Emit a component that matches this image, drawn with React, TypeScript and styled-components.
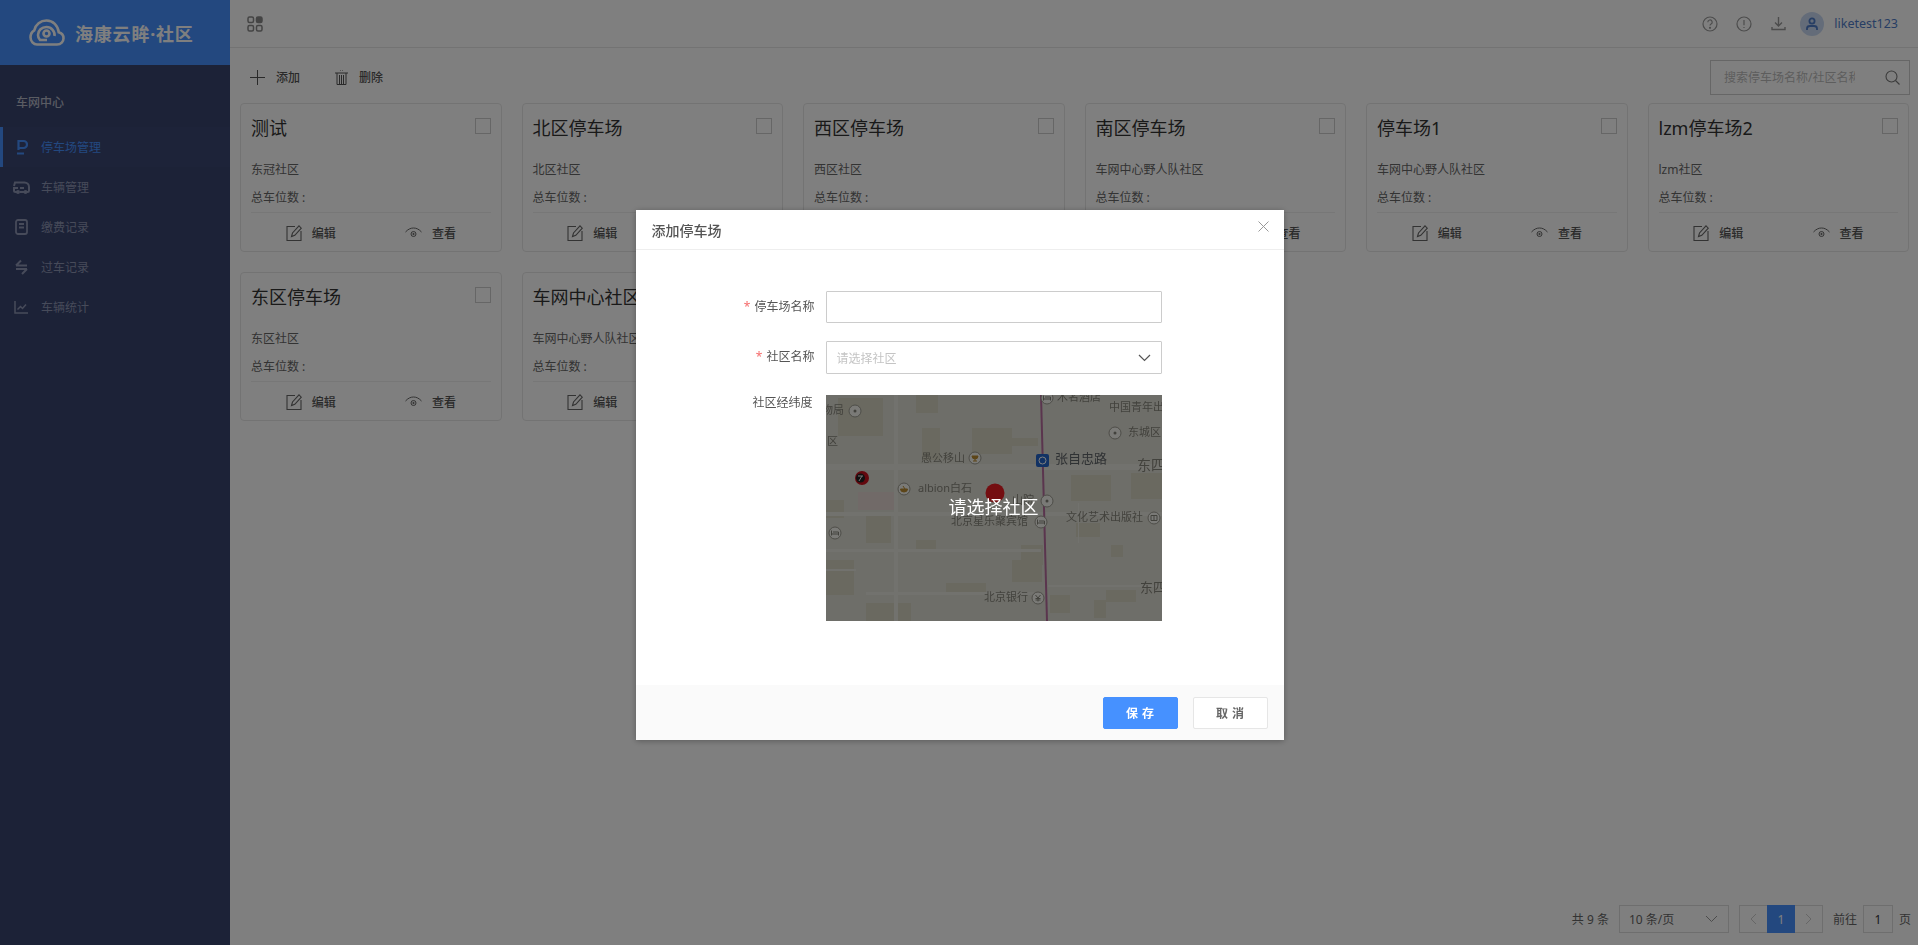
import React from "react";
import styled, { createGlobalStyle } from "styled-components";

const FONT = `"Noto Sans", "Noto Sans CJK SC", sans-serif`;

const Global = createGlobalStyle`
  html, body { margin: 0; padding: 0; height: 100%; overflow: hidden; background: #fff; }
  body { font-family: ${FONT}; font-size: 12px; color: #333; }
  * { box-sizing: border-box; }
`;

const Shell = styled.div`
  display: flex;
  width: 100%;
  height: 100vh;
`;
const Sidebar = styled.aside`
  width: 230px;
  flex: none;
  background: #38446e;
  display: flex;
  flex-direction: column;
`;
const Brand = styled.div`
  height: 65px;
  background: #4691ff;
  display: flex;
  align-items: center;
  padding-left: 29px;
  gap: 10px;
`;
const BrandName = styled.span`
  color: #fff;
  font-size: 18px;
  font-weight: 700;
  letter-spacing: 0.8px;
  white-space: nowrap;
  line-height: 1;
  margin-top: 3px;
`;
const MenuTitle = styled.div`
  height: 62px;
  line-height: 76px;
  padding-left: 16px;
  font-size: 12px;
  font-weight: 500;
  color: #b4b8c6;
`;
const MenuItem = styled.div<{ $active?: boolean }>`
  height: 40px;
  display: flex;
  align-items: center;
  font-size: 12px;
  color: ${(p) => (p.$active ? "#4691ff" : "#8e96b4")};
  background: ${(p) => (p.$active ? "#3b4672" : "transparent")};
  border-left: 3px solid ${(p) => (p.$active ? "#4691ff" : "transparent")};
  padding-left: 8px;
  gap: 9px;
`;
const MenuIcon = styled.span`
  width: 21px;
  height: 18px;
  display: flex;
  align-items: center;
  justify-content: center;
`;

const Main = styled.main`
  flex: 1;
  min-width: 0;
  display: flex;
  flex-direction: column;
`;
const TopBar = styled.header`
  height: 48px;
  flex: none;
  border-bottom: 1px solid #e6e6e6;
  display: flex;
  align-items: center;
  padding: 0 20px 0 17px;
`;
const TopRight = styled.div`
  margin-left: auto;
  display: flex;
  align-items: center;
`;
const TopIcon = styled.span`
  width: 34px;
  display: flex;
  justify-content: center;
  color: #999;
`;
const Avatar = styled.span`
  width: 24px;
  height: 24px;
  border-radius: 50%;
  background: #c9d9f2;
  display: flex;
  align-items: center;
  justify-content: center;
  margin: 0 10px 0 5px;
`;
const UserName = styled.span`
  color: #4f7cc8;
  font-size: 12.5px;
`;
const ToolRow = styled.div`
  height: 55px;
  flex: none;
  display: flex;
  align-items: center;
  padding: 3px 8px 0 20px;
`;
const ToolBtn = styled.button`
  border: 0;
  background: none;
  padding: 0;
  font: 500 12px ${FONT};
  color: #555;
  display: flex;
  align-items: center;
  gap: 11px;
  margin-right: 35px;
`;
const SearchBox = styled.div`
  margin-left: auto;
  width: 200px;
  height: 35px;
  border: 1px solid #ccc;
  display: flex;
  align-items: center;
  padding: 0 9px 0 13px;
`;
const SearchInput = styled.input`
  flex: 1;
  min-width: 0;
  width: 129px;
  border: 0;
  outline: 0;
  background: none;
  padding: 0;
  margin-right: 30px;
  font: 12px ${FONT};
  &::placeholder { color: #bbb; opacity: 1; }
`;
const Grid = styled.section`
  display: grid;
  grid-template-columns: repeat(6, 261.5px);
  grid-auto-rows: 149px;
  gap: 20px 20px;
  padding-left: 10px;
`;
const Card = styled.article`
  border: 1px solid #e6e6e6;
  border-radius: 4px;
  padding: 0 10px;
  display: flex;
  flex-direction: column;
  position: relative;
  overflow: hidden;
`;
const CardHead = styled.div`
  display: flex;
  justify-content: space-between;
  align-items: flex-start;
  height: 52px;
  padding-top: 9px;
`;
const CardTitle = styled.h3`
  margin: 0;
  font-size: 18px;
  font-weight: 400;
  line-height: 30px;
  color: #333;
  white-space: nowrap;
`;
const Check = styled.span`
  width: 16px;
  height: 16px;
  border: 1px solid #ccc;
  flex: none;
  margin-top: 5px;
`;
const CardLine = styled.div`
  font-size: 12px;
  line-height: 28px;
  height: 28px;
  color: #666;
  white-space: nowrap;
`;
const Actions = styled.div`
  border-top: 1px solid #eee;
  margin-top: auto;
  height: 39px;
  padding-top: 1px;
  display: grid;
  grid-template-columns: 1fr 1fr;
`;
const ActionBtn = styled.span`
  display: flex;
  align-items: center;
  justify-content: center;
  gap: 10px;
  font-size: 12px;
  font-weight: 500;
  color: #555;
`;
const Pager = styled.footer`
  margin-top: auto;
  height: 40px;
  margin-bottom: 6px;
  display: flex;
  align-items: center;
  justify-content: flex-end;
  padding-right: 7px;
  font-size: 12px;
  color: #666;
`;
const PageSize = styled.div`
  width: 110px;
  height: 28px;
  margin: 0 10px;
  border: 1px solid #ddd;
  display: flex;
  align-items: center;
  justify-content: space-between;
  padding: 0 10px 0 9px;
`;
const PageNums = styled.div`
  display: flex;
  height: 28px;
  border: 1px solid #ddd;
  margin-right: 10px;
`;
const PageCell = styled.span<{ $on?: boolean }>`
  width: ${(p) => (p.$on ? 28 : 27)}px;
  margin: ${(p) => (p.$on ? "-1px 0" : "0")};
  display: flex;
  align-items: center;
  justify-content: center;
  color: ${(p) => (p.$on ? "#fff" : "#ccc")};
  background: ${(p) => (p.$on ? "#4691ff" : "transparent")};
`;
const PageInput = styled.span`
  width: 30px;
  height: 28px;
  margin: 0 6px;
  border: 1px solid #ddd;
  display: flex;
  align-items: center;
  justify-content: center;
  color: #333;
`;

const Overlay = styled.div`
  position: fixed;
  inset: 0;
  background: rgba(0, 0, 0, 0.5);
  display: flex;
  justify-content: center;
  padding: 210px 0 0 1px;
`;
const Modal = styled.div`
  width: 648px;
  height: 530px;
  background: #fff;
  box-shadow: 0 1px 6px rgba(0, 0, 0, 0.3);
  display: flex;
  flex-direction: column;
`;
const ModalHead = styled.div`
  height: 40px;
  flex: none;
  border-bottom: 1px solid #eee;
  display: flex;
  align-items: center;
  justify-content: space-between;
  padding: 0 15px 0 16px;
`;
const ModalTitle = styled.h2`
  margin: 0;
  font-size: 14px;
  font-weight: 500;
  color: #555;
`;
const CloseBtn = styled.span`
  display: flex;
  margin-top: -6px;
`;
const ModalBody = styled.div`
  flex: 1;
  padding-top: 41px;
  display: flex;
  flex-direction: column;
`;
const FormRow = styled.div<{ $gap: number }>`
  display: flex;
  margin-bottom: ${(p) => p.$gap}px;
`;
const Label = styled.label<{ $h: number; $shift?: number }>`
  width: ${(p) => 179 - (p.$shift ?? 0)}px;
  line-height: ${(p) => p.$h}px;
  text-align: right;
  font-size: 12px;
  color: #555;
  margin-right: ${(p) => 11 + (p.$shift ?? 0)}px;
  white-space: nowrap;
`;
const Star = styled.span`
  color: #f56c6c;
  margin-right: 4px;
`;
const TextField = styled.input`
  width: 336px;
  height: 32px;
  border: 1px solid #ccc;
  border-radius: 1px;
  outline: 0;
  padding: 0 10px;
  font: 12px ${FONT};
`;
const SelectField = styled.div`
  width: 336px;
  height: 33px;
  border: 1px solid #ccc;
  border-radius: 1px;
  display: flex;
  align-items: center;
  justify-content: space-between;
  padding: 0 10px;
  color: #c4c4c4;
  font-size: 12px;
`;
const MapBox = styled.div`
  width: 336px;
  height: 226px;
  position: relative;
  overflow: hidden;
`;
const MapShade = styled.div`
  position: absolute;
  inset: 0;
  background: rgba(0, 0, 0, 0.5);
  color: #fff;
  font-size: 18px;
  display: flex;
  align-items: center;
  justify-content: center;
  padding-bottom: 4px;
`;
const ModalFoot = styled.div`
  height: 55px;
  flex: none;
  background: #fafafa;
  display: flex;
  align-items: center;
  justify-content: flex-end;
  padding: 0 16px 0 0;
  gap: 15px;
`;
const FootBtn = styled.button<{ $primary?: boolean }>`
  width: 75px;
  height: 32px;
  border: 1px solid ${(p) => (p.$primary ? "#4691ff" : "#e6e6e6")};
  border-radius: 2px;
  background: ${(p) => (p.$primary ? "#4691ff" : "#fff")};
  color: ${(p) => (p.$primary ? "#fff" : "#666")};
  font: 700 12px ${FONT};
  letter-spacing: 4px;
  padding: 0 0 0 4px;
`;

const Logo = () => (
  <svg width="36" height="27" viewBox="0 0 36 27" fill="none" stroke="#fff" strokeWidth="2.6">
    <path d="M8 25.500h20c4 0 6.500-3 6.500-6.300 0-3-2-5.300-4.800-6C29 6.500 24 1.500 17.500 1.500 11.500 1.500 6.500 5.500 5.300 11.300 2.800 12.800 1.500 15.300 1.500 18.300c0 4 3 7.200 6.500 7.200z" />
    <path d="M25.500 17c.7-4.500-3-9-8-9-4.700 0-8.500 3.500-8.500 8 0 2 .8 3.600 2 5h7" />
    <circle cx="17.500" cy="14.500" r="3" />
  </svg>
);

const Ico = ({ w = 16, h = 16, c = "currentColor", sw = 1.5, children }: { w?: number; h?: number; c?: string; sw?: number; children: React.ReactNode }) => (
  <svg width={w} height={h} viewBox={`0 0 ${w} ${h}`} fill="none" stroke={c} strokeWidth={sw}>
    {children}
  </svg>
);

const menu: { name: string; icon: React.ReactNode }[] = [
  { name: "停车场管理", icon: <Ico w={12} h={16} sw={2.200}><path d="M2.500 11V2h5a3.500 3.500 0 0 1 0 7H2.500M1 14.500h7" /></Ico> },
  { name: "车辆管理", icon: <Ico w={17} h={13} sw={2}><path d="M4 11H2.500C1.500 11 1 10.300 1 9.500V7h4M1 5l1-3.500h9.500C14 1.500 16 3.500 16 6v3.500c0 1-.5 1.500-1.300 1.500H14M7 11h4M11 7H7" /><circle cx="5" cy="11" r="1" /><circle cx="12.500" cy="11" r="1" /></Ico> },
  { name: "缴费记录", icon: <Ico w={13} h={16} sw={1.800}><rect x="1" y="1" width="11" height="14" rx="2" /><path d="M4 5h5M4 8.500h5" /></Ico> },
  { name: "过车记录", icon: <Ico w={13} h={16} sw={2}><path d="M1 6.500h11M1 6.500l5-5M12 10H1M12 10l-5 5" /></Ico> },
  { name: "车辆统计", icon: <Ico w={15} h={14} sw={1.500}><path d="M1 1v12h13M3.500 9.500l3-3 2 2 3.500-4" /></Ico> },
];

const cards = [
  ["测试", "东冠社区"],
  ["北区停车场", "北区社区"],
  ["西区停车场", "西区社区"],
  ["南区停车场", "车网中心野人队社区"],
  ["停车场1", "车网中心野人队社区"],
  ["lzm停车场2", "lzm社区"],
  ["东区停车场", "东区社区"],
  ["车网中心社区停车场", "车网中心野人队社区"],
];

const EditIcon = () => (
  <svg width="16" height="16" viewBox="0 0 16 16" fill="none" stroke="#666" strokeWidth="1.100">
    <path d="M9 1.500H1v14h14V6" />
    <path d="M5.500 11.500l1-3.500L13 .8l2.300 2.400L8.800 10.300z" />
  </svg>
);
const EyeIcon = () => (
  <svg width="17" height="12" viewBox="0 0 17 12" fill="none" stroke="#666" strokeWidth="1">
    <path d="M.5 5C3 2.300 5.500 1 8.500 1s5.500 1.300 8 4" />
    <circle cx="8.500" cy="7" r="2.500" />
    <circle cx="8.500" cy="7" r=".7" fill="#666" />
  </svg>
);

const MAP_TEXT = "#85847a";

const MapPicture = () => {
  const t = (x: number, y: number, s: string, size = 11, fill = MAP_TEXT) => (
    <text key={s + x} x={x} y={y} fontSize={size} fill={fill} dominantBaseline="middle" fontFamily={FONT}>{s}</text>
  );
  const poi = (x: number, y: number, inner: React.ReactNode) => (
    <g key={`${x}-${y}`} transform={`translate(${x} ${y})`}>
      <circle r="6" fill="#f4f4ee" stroke="#9b9a90" />
      {inner}
    </g>
  );
  const dot = <circle r="1.500" fill="#85847a" />;
  const bed = <path d="M-3.500 2.500v-5M-3.500 1h7v1.500M-2-1h5.500v2" fill="none" stroke="#85847a" />;
  const yen = <path d="M-2.500-3L0 0l2.500-3M0 0v3.500M-2.500.5h5M-2.500 2h5" fill="none" stroke="#85847a" />;
  const book = <path d="M-3-2.500h6v5h-6zM0-2.500v5" fill="none" stroke="#85847a" />;
  const cup = <path d="M-3-2h6a3 3 0 0 1-6 0zM0 1v2M-2 3h4" fill="#b98a30" stroke="#b98a30" />;
  const bowl = <path d="M-3.500 0h7a3.500 3 0 0 1-7 0zM-1-3l2 3" fill="#b98a30" stroke="#b98a30" />;
  const blocks: [number, number, number, number][] = [
    [12, 3, 45, 38], [90, 0, 22, 18], [96, 33, 18, 32], [146, 33, 40, 26], [184, 43, 28, 8],
    [245, 80, 40, 26], [305, 78, 31, 26], [0, 105, 18, 18], [40, 118, 25, 30], [0, 165, 28, 35],
    [195, 150, 22, 20], [186, 165, 30, 22], [120, 188, 40, 12], [40, 208, 45, 18], [90, 145, 20, 12],
    [285, 150, 12, 12], [224, 200, 20, 18], [280, 195, 30, 12], [250, 128, 24, 14], [268, 205, 12, 18],
  ];
  const roads: [number, number, number, number][] = [
    [0, 69, 336, 6], [0, 117, 336, 4], [0, 154, 215, 3], [40, 197, 175, 3], [68, 0, 4, 226],
    [222, 190, 114, 2], [0, 174, 30, 2], [252, 108, 1, 40],
  ];
  return (
    <svg width="336" height="226" viewBox="0 0 336 226" aria-hidden="true">
      <rect width="336" height="226" fill="#dddcd2" />
      {blocks.map(([x, y, w, h], i) => <rect key={i} x={x} y={y} width={w} height={h} fill="#d5d3c0" />)}
      <rect x="32" y="97" width="36" height="18" fill="#e3d5d1" />
      {roads.map(([x, y, w, h], i) => <rect key={i} x={x} y={y} width={w} height={h} fill="#e5e4dc" />)}
      <path d="M215 0L221 226" stroke="#b56a9c" strokeWidth="2" />
      {t(-4, 16, "物局")}{poi(29, 16, dot)}
      {t(1, 47, "区")}
      {poi(221, 3, bed)}
      {t(231, 3, "木名酒店")}
      {t(283, 13, "中国青年出")}
      {poi(289, 38, dot)}{t(302, 38, "东城区")}
      {t(95, 64, "愚公移山")}
      {poi(149, 63, cup)}
      <rect x="210" y="59" width="13" height="13" rx="2" fill="#2464c8" />
      <circle cx="216.500" cy="65.500" r="3.500" fill="none" stroke="#fff" />
      {t(229, 65, "张自忠路", 13, "#5f6468")}
      {t(311, 71, "东四", 14)}
      <circle cx="36" cy="83" r="7" fill="#c8101c" />
      <circle cx="34.500" cy="83" r="4.500" fill="#222" />
      <path d="M32 81h5M33 86l3-5" stroke="#eee" strokeWidth="1" />
      {poi(78, 94, bowl)}
      {t(92, 94, "albion白石")}
      <circle cx="169" cy="98" r="9.500" fill="#e81c22" />
      {t(186, 106, "山院")}
      {poi(221, 106, dot)}
      {t(125, 127, "北京星乐聚宾馆")}
      {poi(215, 127, bed)}
      {t(240, 123, "文化艺术出版社")}
      {poi(328, 123, book)}
      {poi(9, 138, bed)}
      {t(314, 194, "东四", 13)}
      {t(158, 203, "北京银行")}
      {poi(212, 203, yen)}
    </svg>
  );
};

export default function App() {
  return (
    <>
      <Global />
      <Shell>
        <Sidebar>
          <Brand>
            <Logo />
            <BrandName>海康云眸·社区</BrandName>
          </Brand>
          <MenuTitle>车网中心</MenuTitle>
          {menu.map((m, i) => (
            <MenuItem key={m.name} $active={i === 0}>
              <MenuIcon>{m.icon}</MenuIcon>
              {m.name}
            </MenuItem>
          ))}
        </Sidebar>
        <Main>
          <TopBar>
            <svg width="16" height="16" viewBox="0 0 16 16" fill="none" stroke="#888" strokeWidth="1.500">
              <rect x="1" y="1" width="5.500" height="5.500" rx="1.500" />
              <rect x="9.500" y="1" width="5.500" height="5.500" rx="1.500" fill="#888" />
              <rect x="1" y="9.500" width="5.500" height="5.500" rx="1.500" />
              <rect x="9.500" y="9.500" width="5.500" height="5.500" rx="1.500" />
            </svg>
            <TopRight>
              <TopIcon>
                <svg width="16" height="16" viewBox="0 0 16 16" fill="none" stroke="#999" strokeWidth="1.200">
                  <circle cx="8" cy="8" r="7" />
                  <path d="M5.800 6.200a2.200 2.200 0 1 1 3.300 1.900c-.7.400-1.100.8-1.100 1.500" />
                  <circle cx="8" cy="11.800" r=".5" />
                </svg>
              </TopIcon>
              <TopIcon>
                <svg width="16" height="16" viewBox="0 0 16 16" fill="none" stroke="#999" strokeWidth="1.200">
                  <circle cx="8" cy="8" r="7" />
                  <path d="M8 4v5.200M8 11v1" />
                </svg>
              </TopIcon>
              <TopIcon>
                <svg width="15" height="15" viewBox="0 0 15 15" fill="none" stroke="#999" strokeWidth="1.400">
                  <path d="M7.500 1v8.500M4 6.500l3.500 3.500L11 6.500M1 11v2.500h13V11" />
                </svg>
              </TopIcon>
              <Avatar>
                <svg width="12" height="14" viewBox="0 0 12 14" fill="none" stroke="#4f7cc8" strokeWidth="1.800">
                  <circle cx="6" cy="4" r="2.600" />
                  <path d="M1 13v-1.500C1 10 2.500 9 4 9h4c1.500 0 3 1 3 2.500V13" />
                </svg>
              </Avatar>
              <UserName>liketest123</UserName>
            </TopRight>
          </TopBar>
          <ToolRow>
            <ToolBtn>
              <svg width="15" height="15" viewBox="0 0 15 15" stroke="#555" strokeWidth="1">
                <path d="M7.500 0v15M0 7.500h15" />
              </svg>
              添加
            </ToolBtn>
            <ToolBtn>
              <svg width="13" height="16" viewBox="0 0 13 16" fill="none" stroke="#555" strokeWidth="1">
                <path d="M0 4h13M2 4v11.500h9V4M4.500 6v9M6.500 6v9M8.500 6v9M5 1.500h.5M7.500 1.500h.5" />
              </svg>
              删除
            </ToolBtn>
            <SearchBox>
              <SearchInput placeholder="搜索停车场名称/社区名称" readOnly />
              <svg width="15" height="15" viewBox="0 0 15 15" fill="none" stroke="#777" strokeWidth="1.100">
                <circle cx="6.500" cy="6.500" r="5.500" />
                <path d="M10.500 10.500l4 4" />
              </svg>
            </SearchBox>
          </ToolRow>
          <Grid>
            {cards.map(([title, community]) => (
              <Card key={title}>
                <CardHead>
                  <CardTitle>{title}</CardTitle>
                  <Check />
                </CardHead>
                <CardLine>{community}</CardLine>
                <CardLine>总车位数 :</CardLine>
                <Actions>
                  <ActionBtn><EditIcon />编辑</ActionBtn>
                  <ActionBtn><EyeIcon />查看</ActionBtn>
                </Actions>
              </Card>
            ))}
          </Grid>
          <Pager>
            共 9 条
            <PageSize>
              10 条/页
              <svg width="13" height="8" viewBox="0 0 13 8" fill="none" stroke="#999" strokeWidth="1"><path d="M1 1l5.500 5.500L12 1" /></svg>
            </PageSize>
            <PageNums>
              <PageCell>
                <svg width="7" height="12" viewBox="0 0 7 12" fill="none" stroke="#ccc"><path d="M6 1L1 6l5 5" /></svg>
              </PageCell>
              <PageCell $on>1</PageCell>
              <PageCell>
                <svg width="7" height="12" viewBox="0 0 7 12" fill="none" stroke="#ccc"><path d="M1 1l5 5-5 5" /></svg>
              </PageCell>
            </PageNums>
            前往
            <PageInput>1</PageInput>
            页
          </Pager>
        </Main>
      </Shell>
      <Overlay>
        <Modal>
          <ModalHead>
            <ModalTitle>添加停车场</ModalTitle>
            <CloseBtn>
              <svg width="11" height="11" viewBox="0 0 11 11" stroke="#999" strokeWidth="1"><path d="M.5.500l10 10M10.500.500l-10 10" /></svg>
            </CloseBtn>
          </ModalHead>
          <ModalBody>
            <FormRow $gap={18}>
              <Label $h={32}><Star>*</Star>停车场名称</Label>
              <TextField readOnly />
            </FormRow>
            <FormRow $gap={21}>
              <Label $h={31}><Star>*</Star>社区名称</Label>
              <SelectField>
                请选择社区
                <svg width="13" height="8" viewBox="0 0 13 8" fill="none" stroke="#555" strokeWidth="1.200"><path d="M1 1l5.500 5.500L12 1" /></svg>
              </SelectField>
            </FormRow>
            <FormRow $gap={0}>
              <Label $h={16} $shift={2}>社区经纬度</Label>
              <MapBox>
                <MapPicture />
                <MapShade>请选择社区</MapShade>
              </MapBox>
            </FormRow>
          </ModalBody>
          <ModalFoot>
            <FootBtn $primary>保存</FootBtn>
            <FootBtn>取消</FootBtn>
          </ModalFoot>
        </Modal>
      </Overlay>
    </>
  );
}
